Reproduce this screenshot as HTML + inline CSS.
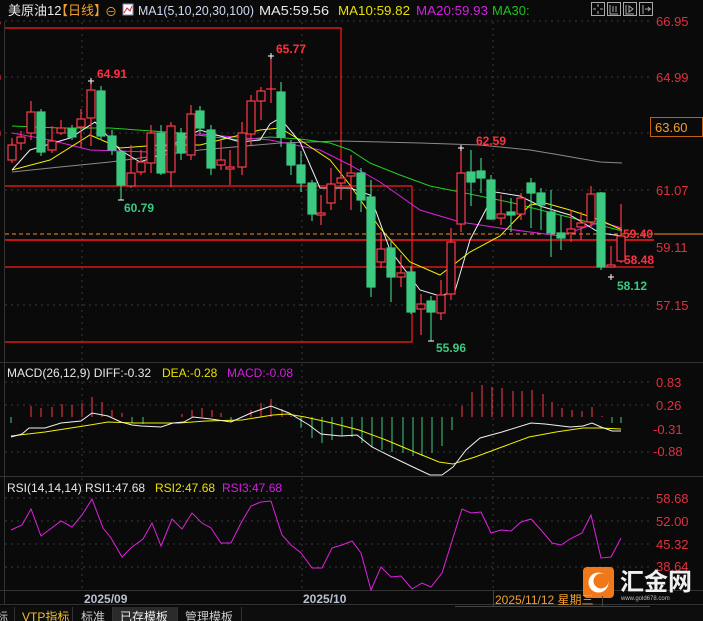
<!DOCTYPE html>
<html><head><meta charset="utf-8"><style>
html,body{margin:0;padding:0;background:#0a0a0a;width:703px;height:621px;overflow:hidden}
svg{display:block}
text{font-family:"Liberation Sans","Noto Sans CJK SC",sans-serif}
</style></head><body>
<svg width="703" height="621" viewBox="0 0 703 621" xmlns="http://www.w3.org/2000/svg">
<rect width="703" height="621" fill="#0a0a0a"/>
<g stroke="#3a3a3a" stroke-dasharray="2,4" stroke-width="1">
<line x1="5" y1="21" x2="650" y2="21"/><line x1="5" y1="77" x2="650" y2="77"/><line x1="5" y1="133" x2="650" y2="133"/><line x1="5" y1="190" x2="650" y2="190"/><line x1="5" y1="305" x2="650" y2="305"/>
<line x1="5" y1="382" x2="650" y2="382"/><line x1="5" y1="405" x2="650" y2="405"/><line x1="5" y1="452" x2="650" y2="452"/>
<line x1="5" y1="498" x2="650" y2="498"/><line x1="5" y1="521" x2="650" y2="521"/><line x1="5" y1="544" x2="650" y2="544"/><line x1="5" y1="567" x2="650" y2="567"/>
<line x1="82" y1="22" x2="82" y2="591"/><line x1="302" y1="22" x2="302" y2="591"/><line x1="493" y1="22" x2="493" y2="591"/>
</g>
<g stroke="#333" stroke-width="1">
<line x1="4.5" y1="22" x2="4.5" y2="604"/>
<line x1="0" y1="362.5" x2="703" y2="362.5"/><line x1="0" y1="476.5" x2="703" y2="476.5"/><line x1="0" y1="590.5" x2="703" y2="590.5"/><line x1="0" y1="604.5" x2="703" y2="604.5"/>
</g>
<text x="8" y="15" font-size="13" fill="#e8e8e8">美原油12</text>
<text x="55" y="15" font-size="13" fill="#f0a030">【日线】</text>
<text x="105" y="16" font-size="12" fill="#f0a030">⊖</text>
<rect x="123" y="4" width="10" height="11" fill="#fff" stroke="#88a" /><polyline points="124,13 127,8 130,11 132,6" fill="none" stroke="#e02030"/>
<text x="138" y="15" font-size="13" fill="#d0d8f0" textLength="116" lengthAdjust="spacingAndGlyphs">MA1(5,10,20,30,100)</text>
<text x="259" y="15" font-size="13" fill="#e8e8e8" textLength="70" lengthAdjust="spacingAndGlyphs">MA5:59.56</text>
<text x="338" y="15" font-size="13" fill="#e8e000" textLength="72" lengthAdjust="spacingAndGlyphs">MA10:59.82</text>
<text x="416" y="15" font-size="13" fill="#d020e0" textLength="72" lengthAdjust="spacingAndGlyphs">MA20:59.93</text>
<text x="492" y="15" font-size="13" fill="#20c020">MA30:</text>
<g fill="none" stroke="#aaa" stroke-width="1">
<rect x="591.5" y="2.5" width="13" height="13"/><rect x="607.5" y="2.5" width="13" height="13"/><rect x="623.5" y="2.5" width="13" height="13"/><rect x="639.5" y="2.5" width="13" height="13"/>
<path d="M598 4v3M598 11v3M593 9h3M600 9h3M610 5v9h8M613 6v6M616 6v6M626 5v9h8M629 6l4 3-4 3zM643 5v9M645 9h6M648 7l2 2-2 2"/>
</g>
<g stroke="#ff1a1a" stroke-width="1.2" fill="none">
<polyline points="5,28 341,28 341,186"/>
<line x1="5" y1="186" x2="412" y2="186"/>
<polyline points="412,186 412,342 5,342"/>
<line x1="5" y1="240" x2="654" y2="240" stroke-width="1.6"/>
<line x1="5" y1="267" x2="654" y2="267"/>
</g>
<line x1="5" y1="234" x2="654" y2="234" stroke="#f09020" stroke-dasharray="4,3"/>
<line x1="654" y1="234" x2="703" y2="234" stroke="#f09020"/>
<g fill="none" stroke-width="1">
<polyline stroke="#8a8a8a" points="12,172 60,167 110,162 200,150 280,143 340,141 420,143 480,145 530,150 560,155 600,162 622,163"/>
<polyline stroke="#20d020" points="12,126 60,128 110,128 180,133 240,140 270,137 300,139 330,143 350,150 370,163 400,175 430,186 460,192 513,203 560,215 600,225 622,231"/>
<polyline stroke="#e020e0" points="12,133 50,140 90,150 150,152 200,134 270,140 320,150 350,165 380,182 420,210 460,222 500,228 560,236 600,222 622,228"/>
<polyline stroke="#f0f000" points="12,170 50,160 90,135 120,148 160,145 200,145 260,130 280,128 300,140 330,160 350,185 380,228 410,262 440,275 470,252 500,236 530,205 545,203 570,210 600,220 622,230"/>
<polyline stroke="#f0f0f0" points="12,170 30,150 70,138 95,122 120,150 140,162 160,155 180,140 200,130 240,142 260,140 270,124 280,118 300,142 320,188 350,188 370,195 390,250 420,290 440,296 455,291 470,240 495,192 520,196 540,206 570,215 600,233 622,236"/>
</g>
<g stroke-width="1.2">
<g stroke="#ff3a4a" fill="#0a0a0a">
<line x1="12" y1="138" x2="12" y2="163"/><rect x="8" y="145" width="8" height="15"/>
<line x1="21" y1="131" x2="21" y2="150"/><rect x="17" y="137" width="8" height="6"/>
<line x1="31" y1="101" x2="31" y2="140"/><rect x="27" y="112" width="8" height="21"/>
<line x1="52" y1="126" x2="52" y2="153"/><rect x="48" y="141" width="8" height="9"/>
<line x1="61" y1="120" x2="61" y2="135"/><rect x="57" y="128" width="8" height="5"/>
<line x1="81" y1="109" x2="81" y2="148"/><rect x="77" y="119" width="8" height="8"/>
<line x1="91" y1="81" x2="91" y2="146"/><rect x="87" y="90" width="8" height="28"/>
<line x1="131" y1="145" x2="131" y2="188"/><rect x="127" y="173" width="8" height="13"/>
<line x1="141" y1="150" x2="141" y2="175"/><rect x="137" y="162" width="8" height="10"/>
<line x1="151" y1="125" x2="151" y2="173"/><rect x="147" y="133" width="8" height="30"/>
<line x1="171" y1="122" x2="171" y2="187"/><rect x="167" y="126" width="8" height="46"/>
<line x1="191" y1="105" x2="191" y2="160"/><rect x="187" y="114" width="8" height="41"/>
<line x1="221" y1="140" x2="221" y2="170"/><rect x="217" y="160" width="8" height="5"/>
<line x1="230" y1="150" x2="230" y2="185"/><rect x="226" y="167" width="8" height="2"/>
<line x1="242" y1="122" x2="242" y2="175"/><rect x="238" y="133" width="8" height="34"/>
<line x1="251" y1="95" x2="251" y2="145"/><rect x="247" y="101" width="8" height="33"/>
<line x1="261" y1="87" x2="261" y2="120"/><rect x="257" y="91" width="8" height="10"/>
<line x1="271" y1="56" x2="271" y2="103"/><line x1="266" y1="89" x2="276" y2="89"/>
<line x1="321" y1="195" x2="321" y2="225"/><rect x="317" y="213" width="8" height="2"/>
<line x1="331" y1="168" x2="331" y2="210"/><rect x="327" y="184" width="8" height="19"/>
<line x1="341" y1="164" x2="341" y2="200"/><rect x="337" y="178" width="8" height="5"/>
<line x1="351" y1="155" x2="351" y2="210"/><rect x="347" y="173" width="8" height="3"/>
<line x1="381" y1="232" x2="381" y2="268"/><rect x="377" y="249" width="8" height="13"/>
<line x1="401" y1="255" x2="401" y2="287"/><rect x="397" y="273" width="8" height="4"/>
<line x1="421" y1="294" x2="421" y2="335"/><rect x="417" y="304" width="8" height="5"/>
<line x1="441" y1="280" x2="441" y2="320"/><rect x="437" y="295" width="8" height="18"/>
<line x1="451" y1="228" x2="451" y2="300"/><rect x="447" y="242" width="8" height="52"/>
<line x1="461" y1="145" x2="461" y2="232"/><rect x="457" y="173" width="8" height="51"/>
<line x1="501" y1="195" x2="501" y2="225"/><rect x="497" y="214" width="8" height="4"/>
<line x1="521" y1="193" x2="521" y2="220"/><rect x="517" y="198" width="8" height="16"/>
<line x1="571" y1="210" x2="571" y2="242"/><rect x="567" y="229" width="8" height="4"/>
<line x1="581" y1="212" x2="581" y2="240"/><rect x="577" y="223" width="8" height="4"/>
<line x1="591" y1="186" x2="591" y2="228"/><rect x="587" y="194" width="8" height="28"/>
<line x1="611" y1="246" x2="611" y2="265"/><rect x="607" y="265" width="8" height="2"/>
<line x1="621" y1="204" x2="621" y2="263"/><rect x="617" y="236" width="8" height="25"/>
</g>
<g stroke="#3cc980" fill="#3cc980">
<line x1="41" y1="109" x2="41" y2="156"/><rect x="37" y="112" width="8" height="40"/>
<line x1="72" y1="125" x2="72" y2="140"/><rect x="68" y="129" width="8" height="8"/>
<line x1="101" y1="86" x2="101" y2="140"/><rect x="97" y="91" width="8" height="45"/>
<line x1="112" y1="130" x2="112" y2="155"/><rect x="108" y="136" width="8" height="14"/>
<line x1="121" y1="150" x2="121" y2="200"/><rect x="117" y="152" width="8" height="33"/>
<line x1="161" y1="125" x2="161" y2="175"/><rect x="157" y="133" width="8" height="40"/>
<line x1="181" y1="128" x2="181" y2="160"/><rect x="177" y="133" width="8" height="20"/>
<line x1="200" y1="106" x2="200" y2="134"/><rect x="196" y="111" width="8" height="17"/>
<line x1="211" y1="125" x2="211" y2="175"/><rect x="207" y="130" width="8" height="38"/>
<line x1="281" y1="82" x2="281" y2="147"/><rect x="277" y="92" width="8" height="45"/>
<line x1="291" y1="140" x2="291" y2="175"/><rect x="287" y="144" width="8" height="21"/>
<line x1="301" y1="151" x2="301" y2="192"/><rect x="297" y="165" width="8" height="18"/>
<line x1="312" y1="180" x2="312" y2="221"/><rect x="308" y="183" width="8" height="31"/>
<line x1="361" y1="168" x2="361" y2="212"/><rect x="357" y="173" width="8" height="27"/>
<line x1="371" y1="180" x2="371" y2="297"/><rect x="367" y="197" width="8" height="90"/>
<line x1="391" y1="240" x2="391" y2="302"/><rect x="387" y="248" width="8" height="29"/>
<line x1="411" y1="266" x2="411" y2="314"/><rect x="407" y="272" width="8" height="40"/>
<line x1="431" y1="296" x2="431" y2="341"/><rect x="427" y="301" width="8" height="11"/>
<line x1="471" y1="150" x2="471" y2="206"/><rect x="467" y="172" width="8" height="10"/>
<line x1="481" y1="158" x2="481" y2="193"/><rect x="477" y="171" width="8" height="7"/>
<line x1="491" y1="175" x2="491" y2="220"/><rect x="487" y="180" width="8" height="39"/>
<line x1="511" y1="198" x2="511" y2="232"/><rect x="507" y="212" width="8" height="3"/>
<line x1="531" y1="178" x2="531" y2="228"/><rect x="527" y="183" width="8" height="10"/>
<line x1="541" y1="188" x2="541" y2="230"/><rect x="537" y="193" width="8" height="12"/>
<line x1="551" y1="190" x2="551" y2="257"/><rect x="547" y="212" width="8" height="21"/>
<line x1="561" y1="215" x2="561" y2="250"/><rect x="557" y="233" width="8" height="5"/>
<line x1="601" y1="192" x2="601" y2="270"/><rect x="597" y="193" width="8" height="74"/>
</g>
</g>
<g stroke="#fff" stroke-width="1">
<line x1="88" y1="81" x2="94" y2="81"/><line x1="91" y1="78" x2="91" y2="84"/>
<line x1="268" y1="56" x2="274" y2="56"/><line x1="271" y1="53" x2="271" y2="59"/>
<line x1="458" y1="148" x2="464" y2="148"/><line x1="461" y1="145" x2="461" y2="151"/>
<line x1="428" y1="341" x2="434" y2="341"/><line x1="608" y1="277" x2="614" y2="277"/><line x1="611" y1="274" x2="611" y2="280"/>
<line x1="118" y1="200" x2="124" y2="200"/>
</g>
<g font-size="12" font-weight="bold">
<text x="276" y="53" fill="#ff3040">65.77</text>
<text x="97" y="78" fill="#ff3040">64.91</text>
<text x="124" y="212" fill="#3cc980">60.79</text>
<text x="476" y="145" fill="#ff3040">62.59</text>
<text x="436" y="352" fill="#3cc980">55.96</text>
<text x="617" y="290" fill="#3cc980">58.12</text>
<text x="623" y="238" fill="#ff3040">59.40</text>
<text x="624" y="264" fill="#ff3040">58.48</text>
</g>
<g font-size="13" fill="#e03040">
<text x="656" y="26">66.95</text><text x="656" y="82">64.99</text><text x="656" y="195">61.07</text><text x="656" y="252">59.11</text><text x="656" y="310">57.15</text>
<text x="656" y="387">0.83</text><text x="656" y="410">0.26</text><text x="653" y="434">-0.31</text><text x="653" y="456">-0.88</text>
<text x="656" y="503">58.68</text><text x="656" y="526">52.00</text><text x="656" y="549">45.32</text><text x="656" y="571">38.64</text>
<text x="-6" y="82">0</text><text x="-6" y="138">0</text><text x="-6" y="26">5</text>
</g>
<rect x="650.5" y="117.5" width="52" height="19" fill="#0a0a0a" stroke="#c06010"/>
<text x="655" y="132" font-size="13" fill="#f0a030">63.60</text>
<text x="7" y="377" font-size="12" fill="#e8e8e8">MACD(26,12,9) DIFF:-0.32</text>
<text x="162" y="377" font-size="12" fill="#e8e000">DEA:-0.28</text>
<text x="227" y="377" font-size="12" fill="#d020e0">MACD:-0.08</text>
<g stroke="#ff3a4a" stroke-width="1">
<path d="M31 417V406M41 417V408M52 417V407M62 417V404M72 417V405M82 417V403M92 417V397M102 417V402M112 417V410M122 417V413M182 417V414M192 417V410M202 417V408M212 417V410M221 417V413M241 417V417M251 417V410M261 417V403M271 417V399M282 417V409M291 417V416M462 417V406M472 417V392M482 417V385M492 417V387M502 417V388M513 417V391M522 417V391M532 417V390M543 417V394M552 417V402M562 417V408M572 417V410M582 417V411M592 417V407M602 417V416"/>
</g>
<g stroke="#3cc980" stroke-width="1">
<path d="M11 417V423M132 417V423M143 417V424M231 417V422M301 417V428M312 417V438M322 417V443M332 417V440M342 417V436M352 417V437M362 417V443M372 417V447M382 417V450M392 417V452M403 417V453M413 417V456M422 417V456M432 417V453M442 417V446M452 417V430M612 417V423M621 417V423"/>
</g>
<polyline fill="none" stroke="#f0f000" points="11,436 45,432 90,425 108,422 135,423 179,423 206,421 242,420 273,415 287,414 305,417 332,423 359,430 386,440 417,453 439,462 453,464 475,457 502,447 529,437 556,432 583,428 601,428 621,429"/>
<polyline fill="none" stroke="#f0f0f0" points="11,437 22,434 29,428 45,428 61,423 81,421 92,413 108,416 121,422 132,425 141,426 161,427 173,423 184,422 193,417 211,419 231,422 251,413 271,406 289,413 309,425 321,434 341,436 357,435 372,447 390,456 413,467 430,475 442,475 453,467 466,450 480,438 502,432 531,423 545,424 570,427 583,426 592,423 601,427 612,431 621,431"/>
<text x="7" y="492" font-size="12" fill="#e8e8e8">RSI(14,14,14) RSI1:47.68</text>
<text x="155" y="492" font-size="12" fill="#e8e000">RSI2:47.68</text>
<text x="222" y="492" font-size="12" fill="#d020e0">RSI3:47.68</text>
<polyline fill="none" stroke="#e020e0" points="11,530 22,525 31,509 41,536 61,521 72,527 82,515 92,499 103,528 111,538 122,557 132,547 143,539 152,523 161,546 172,519 182,529 192,513 202,523 211,528 221,543 231,543 241,523 251,506 261,502 271,501 282,535 291,545 301,553 312,568 322,568 332,548 342,545 352,541 361,553 371,590 381,567 391,577 401,576 412,589 422,583 431,587 442,573 462,509 471,513 481,512 491,533 501,530 511,531 521,522 531,519 541,530 552,543 561,545 570,539 582,533 591,515 601,558 611,557 621,538"/>
<rect x="583" y="567" width="31" height="31" rx="4" fill="#f07818"/>
<circle cx="598.5" cy="582.5" r="10" fill="#fff"/><circle cx="601" cy="581" r="7.5" fill="#f07818"/>
<text x="620" y="590" font-size="24" font-weight="bold" fill="#f0f0f0">汇金网</text>
<text x="621" y="600" font-size="6" fill="#bbb">www.gold678.com</text>
<text x="84" y="603" font-size="12" font-weight="bold" fill="#b8c0d0">2025/09</text>
<text x="303" y="603" font-size="12" font-weight="bold" fill="#b8c0d0">2025/10</text>
<line x1="493.5" y1="591" x2="493.5" y2="606" stroke="#444"/>
<line x1="602.5" y1="596" x2="602.5" y2="606" stroke="#444"/>
<text x="495" y="604" font-size="12" fill="#f0a030">2025/11/12 星期三</text>
<line x1="455" y1="606.5" x2="650" y2="606.5" stroke="#444"/>
<rect x="0" y="607" width="703" height="14" fill="#0d0d0d"/>
<rect x="113" y="607" width="64" height="14" fill="#2a2a2a"/>
<g stroke="#333"><line x1="14.5" y1="607" x2="14.5" y2="621"/><line x1="72.5" y1="607" x2="72.5" y2="621"/><line x1="112.5" y1="607" x2="112.5" y2="621"/><line x1="177.5" y1="607" x2="177.5" y2="621"/><line x1="241.5" y1="607" x2="241.5" y2="621"/></g>
<g font-size="12"><text x="-4" y="621" fill="#ccc">标</text><text x="22" y="621" fill="#f0c030">VTP指标</text><text x="81" y="621" fill="#ccc">标准</text><text x="120" y="621" fill="#eee">已存模板</text><text x="185" y="621" fill="#ccc">管理模板</text></g>
</svg>
</body></html>
